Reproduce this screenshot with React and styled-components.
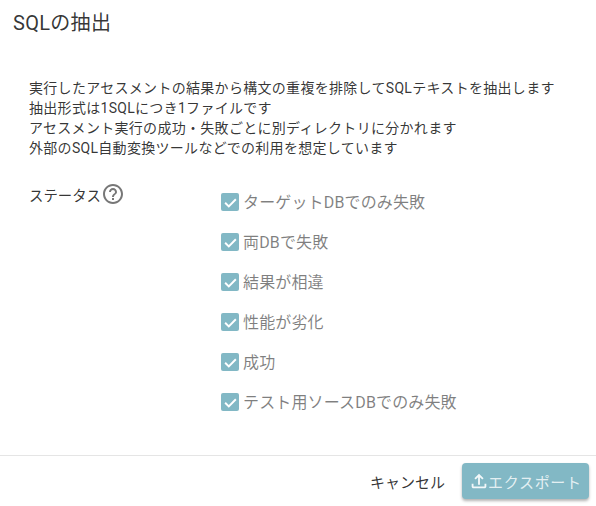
import styled, { createGlobalStyle } from "styled-components";

const options = [
  "ターゲットDBでのみ失敗",
  "両DBで失敗",
  "結果が相違",
  "性能が劣化",
  "成功",
  "テスト用ソースDBでのみ失敗",
];

const description = [
  "実行したアセスメントの結果から構文の重複を排除してSQLテキストを抽出します",
  "抽出形式は1SQLにつき1ファイルです",
  "アセスメント実行の成功・失敗ごとに別ディレクトリに分かれます",
  "外部のSQL自動変換ツールなどでの利用を想定しています",
];

const GlobalStyle = createGlobalStyle`
  html, body {
    margin: 0;
    background: #fff;
  }
  body {
    font-family: Roboto, "Noto Sans CJK JP", sans-serif;
    color: rgba(0, 0, 0, 0.8);
  }
`;

const Dialog = styled.div`
  width: 596px;
  height: 506px;
  display: flex;
  flex-direction: column;
  overflow: hidden;
  background: #fff;
`;

const Title = styled.h2`
  margin: 0;
  padding: 9px 13px 0;
  height: 50px;
  box-sizing: border-box;
  font-size: 20px;
  font-weight: 400;
  line-height: 28px;
  letter-spacing: 0.3px;
`;

const Content = styled.div`
  flex: 1;
  padding: 28px 29px 0;
`;

const Description = styled.p`
  margin: 0;
  font-size: 14px;
  line-height: 20px;
  letter-spacing: 0.3px;
`;

const StatusRow = styled.div`
  display: flex;
  margin-top: 24px;
`;

const StatusLabel = styled.div`
  width: 192px;
  height: 24px;
  display: flex;
  align-items: center;
  font-size: 14.4px;
`;

const OptionList = styled.div`
  display: flex;
  flex-direction: column;
  gap: 16px;
  padding-top: 7px;
`;

const Option = styled.label`
  display: flex;
  align-items: center;
  gap: 4px;
  height: 24px;
  font-size: 16px;
  letter-spacing: 0.15px;
  color: rgba(0, 0, 0, 0.5);
`;

const CheckBox = styled.span`
  width: 18px;
  height: 18px;
  margin-top: 2px;
  border-radius: 2px;
  background: #82b8c5;
  display: flex;
  align-items: center;
  justify-content: center;
`;

const Footer = styled.div`
  height: 50px;
  border-top: 1px solid #e5e5e5;
  display: flex;
  justify-content: flex-end;
  align-items: center;
  gap: 8px;
  padding: 0 7px 0 0;
`;

const CancelButton = styled.button`
  border: 0;
  background: none;
  padding: 0 9px;
  height: 36px;
  font: inherit;
  font-size: 15px;
  color: rgba(0, 0, 0, 0.8);
`;

const ExportButton = styled.button`
  border: 0;
  width: 127px;
  height: 36px;
  border-radius: 4px;
  background: #82b8c5;
  color: rgba(255, 255, 255, 0.8);
  font: inherit;
  font-size: 15px;
  letter-spacing: 0.7px;
  display: flex;
  align-items: center;
  padding: 0 0 0 6px;
  box-shadow: 0 2px 3px rgba(0, 0, 0, 0.3);

  svg {
    margin-right: -2px;
  }
`;

const HelpIcon = () => (
  <svg width="24" height="24" viewBox="0 0 24 24" fill="#777">
    <path d="M11 18h2v-2h-2v2zm1-16C6.48 2 2 6.48 2 12s4.48 10 10 10 10-4.48 10-10S17.52 2 12 2zm0 18c-4.41 0-8-3.59-8-8s3.59-8 8-8 8 3.59 8 8-3.59 8-8 8zm0-14c-2.21 0-4 1.79-4 4h2c0-1.1.9-2 2-2s2 .9 2 2c0 2-3 1.75-3 5h2c0-2.25 3-2.5 3-5 0-2.21-1.79-4-4-4z" />
  </svg>
);

const CheckIcon = () => (
  <svg width="15" height="15" viewBox="0 0 14 14" fill="none" stroke="#fff" strokeWidth="1.8">
    <path d="M2 7.2l3.4 3.4L12 4" />
  </svg>
);

const UploadIcon = () => (
  <svg width="22" height="22" viewBox="0 0 24 24" fill="rgba(255,255,255,0.9)">
    <path d="M18 15v3H6v-3H4v3c0 1.1.9 2 2 2h12c1.1 0 2-.9 2-2v-3h-2zM7 9l1.41 1.41L11 7.83V16h2V7.83l2.59 2.58L17 9l-5-5-5 5z" />
  </svg>
);

export default function App() {
  return (
    <Dialog>
      <GlobalStyle />
      <Title>SQLの抽出</Title>
      <Content>
        <Description>
          {description.map((line) => (
            <span key={line}>
              {line}
              <br />
            </span>
          ))}
        </Description>
        <StatusRow>
          <StatusLabel>
            ステータス
            <HelpIcon />
          </StatusLabel>
          <OptionList>
            {options.map((option) => (
              <Option key={option}>
                <CheckBox>
                  <CheckIcon />
                </CheckBox>
                {option}
              </Option>
            ))}
          </OptionList>
        </StatusRow>
      </Content>
      <Footer>
        <CancelButton>キャンセル</CancelButton>
        <ExportButton>
          <UploadIcon />
          エクスポート
        </ExportButton>
      </Footer>
    </Dialog>
  );
}
